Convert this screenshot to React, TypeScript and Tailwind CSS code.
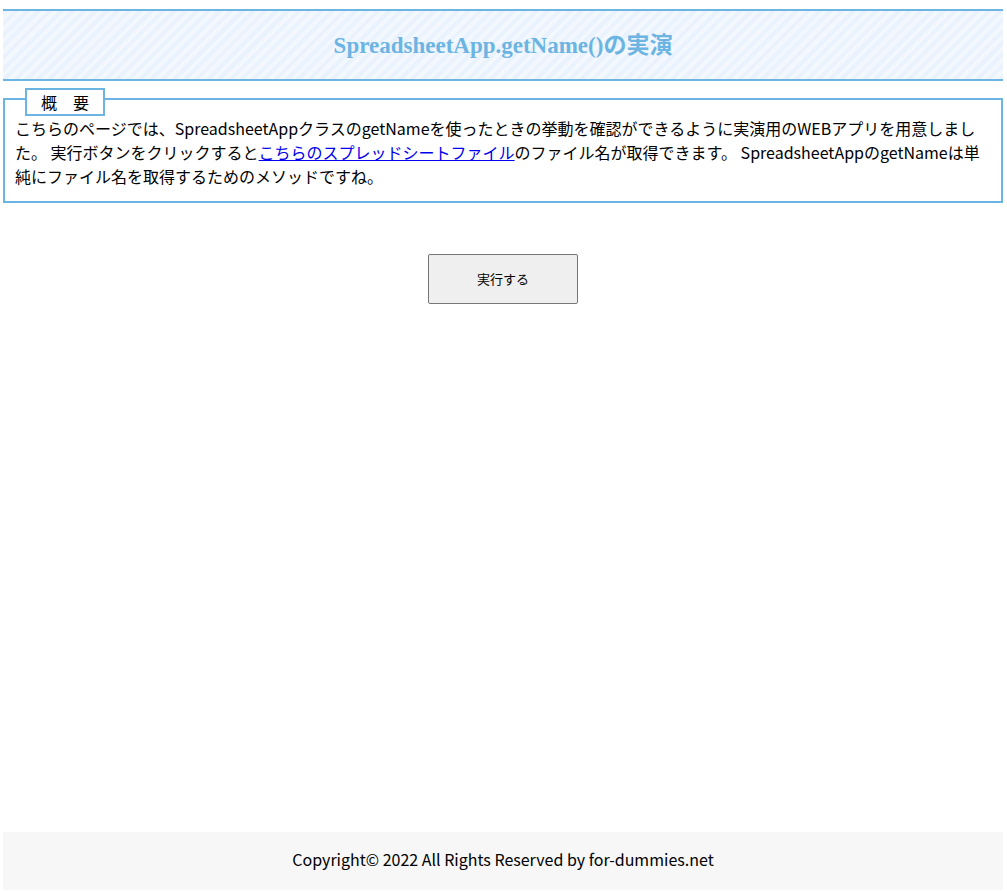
export default function App() {
  return (
    <div className="min-h-screen flex flex-col font-['Noto_Sans_CJK_JP',sans-serif] text-black bg-white">
      <header className="w-[1000px] ml-[3px] mt-[9px] h-[72px] pt-[3px] border-y-2 border-[#6cb4e2] bg-[repeating-linear-gradient(-45deg,#eaf3fd_0px,#eaf3fd_4px,#f3f8fe_4px,#f3f8fe_8px)] flex items-center justify-center">
        <h1 className="text-[23px] font-bold text-[#6cb4e2] font-['Liberation_Serif','Noto_Sans_CJK_JP',serif]">
          SpreadsheetApp.getName()の実演
        </h1>
      </header>

      <section className="relative w-[1000px] ml-[3px] mt-[17px] border-2 border-[#6cb4e2] px-[10px] pt-[16px] pb-[13px]">
        <div className="absolute left-[20px] -top-[12px] w-[80px] h-[28px] border-2 border-[#6cb4e2] bg-white text-center text-[16px] leading-[24px]">
          概　要
        </div>
        <p className="text-[16px] leading-[24px]">
          こちらのページでは、SpreadsheetAppクラスのgetNameを使ったときの挙動を確認ができるように実演用のWEBアプリを用意しました。 実行ボタンをクリックすると
          <a href="#" className="text-[#0000ee] underline">
            こちらのスプレッドシートファイル
          </a>
          のファイル名が取得できます。 SpreadsheetAppのgetNameは単純にファイル名を取得するためのメソッドですね。
        </p>
      </section>

      <div className="w-[1000px] ml-[3px] flex justify-center mt-[51px]">
        <button className="w-[150px] h-[50px] bg-[#efefef] border border-[#767676] rounded-[2px] text-[13px]">
          実行する
        </button>
      </div>

      <footer className="w-[1000px] ml-[3px] mt-auto h-[58px] mb-px pb-[5px] bg-[#f7f7f7] flex items-center justify-center text-[16px]">
        Copyright© 2022 All Rights Reserved by for-dummies.net
      </footer>
    </div>
  )
}
